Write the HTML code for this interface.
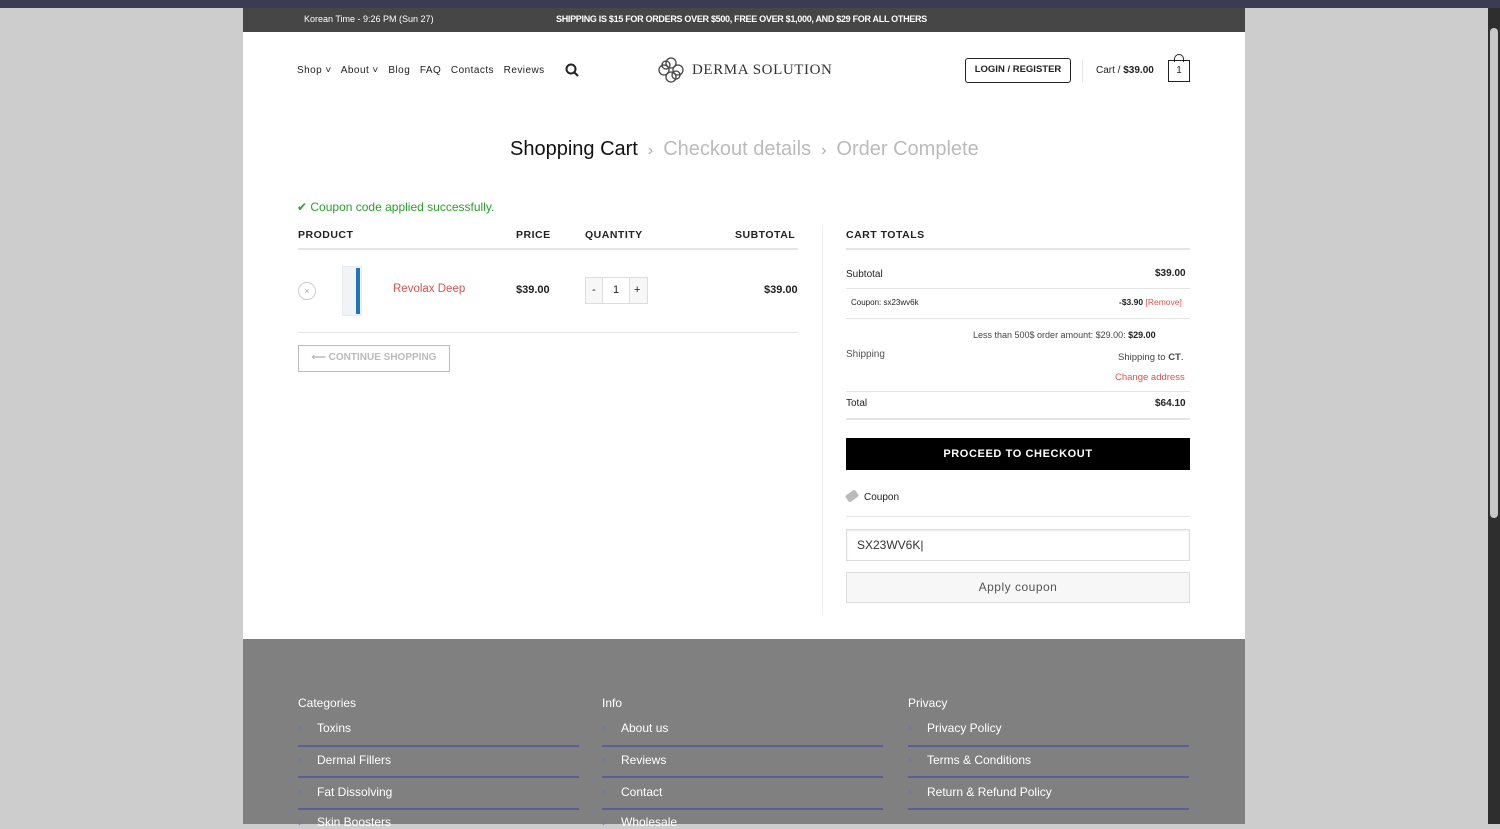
<!DOCTYPE html>
<html><head><meta charset="utf-8"><style>
*{margin:0;padding:0;box-sizing:border-box}
body{width:1500px;height:824px;overflow:hidden;background:#cdcdcd;font-family:"Liberation Sans",sans-serif;position:relative;color:#222}
.a{position:absolute}
.top{left:0;top:0;width:1500px;height:8px;background:#3b3b52}
.sb{left:1488px;top:8px;width:12px;height:816px;background:#2e2e2e}
.sb i{position:absolute;left:2px;top:20px;width:8px;height:490px;background:#c8c8c8;border-radius:4px}
.wrap{left:243px;top:8px;width:1002px;height:631px;background:#fff}
.tb{left:243px;top:8px;width:1002px;height:24px;background:#464646;color:#fff;font-size:9px}
.foot{left:243px;top:639px;width:1002px;height:185px;background:#808080;color:#fff}
.nav{font-size:10px;color:#222;letter-spacing:.45px;word-spacing:0}
.sm{font-size:10px}
.b{font-weight:bold}
.hr{height:1px;background:#e4e4e4}
.fl{position:absolute;font-size:12px;color:#fff}
.fl span{color:#6a74b0;display:inline-block;width:19px}
.fline{position:absolute;height:2px;background:#5a6190;width:281px}
</style></head><body>
<div class="a top"></div>
<div class="a wrap"></div>
<div class="a tb"><span class="a" style="left:61px;top:6px">Korean Time - 9:26 PM (Sun 27)</span><span class="a b" style="left:313px;top:6px;letter-spacing:-.3px">SHIPPING IS $15 FOR ORDERS OVER $500, FREE OVER $1,000, AND $29 FOR ALL OTHERS</span></div>
<div class="a nav" style="left:297px;top:65px">Shop ˅ &nbsp; About ˅ &nbsp; Blog &nbsp; FAQ &nbsp; Contacts &nbsp; Reviews</div>
<svg class="a" style="left:565px;top:63px" width="14" height="14"><circle cx="6" cy="6" r="4.5" fill="none" stroke="#222" stroke-width="2"/><path d="M9 9l4 4" stroke="#222" stroke-width="2"/></svg>
<svg class="a" style="left:656px;top:56px" width="30" height="28"><g fill="none" stroke="#444" stroke-width="1.3"><circle cx="15" cy="7" r="5"/><circle cx="15" cy="21" r="5"/><circle cx="8" cy="14" r="5"/><circle cx="22" cy="14" r="5"/><circle cx="10" cy="9" r="4"/><circle cx="20" cy="19" r="4"/></g></svg>
<div class="a" style="left:692px;top:62px;font-family:'Liberation Serif',serif;font-size:15px;color:#333;letter-spacing:.6px">DERMA SOLUTION</div>
<div class="a b" style="left:965px;top:58px;width:106px;height:25px;border:1.5px solid #222;border-radius:3px;font-size:9.5px;text-align:center;line-height:22px">LOGIN / REGISTER</div>
<div class="a" style="left:1082px;top:60px;width:1px;height:22px;background:#e5e5e5"></div>
<div class="a sm" style="left:1096px;top:65px">Cart / <b>$39.00</b></div>
<div class="a" style="left:1168px;top:60px;width:22px;height:22px;border:1.5px solid #222;font-size:10px;text-align:center;line-height:19px">1</div>
<div class="a" style="left:1174px;top:54px;width:10px;height:8px;border:1.5px solid #222;border-bottom:none;border-radius:5px 5px 0 0"></div>
<div class="a" style="left:510px;top:138px;font-size:20px;color:#111">Shopping Cart <span style="color:#aaa;font-size:16px">&nbsp;›&nbsp;</span> <span style="color:#bbb">Checkout details</span> <span style="color:#aaa;font-size:16px">&nbsp;›&nbsp;</span> <span style="color:#bbb">Order Complete</span></div>
<div class="a" style="left:297px;top:200px;font-size:12px;color:#2ba02b">✔ Coupon code applied successfully.</div>
<div class="a b" style="left:298px;top:229px;font-size:10.5px;letter-spacing:.5px">PRODUCT</div>
<div class="a b" style="left:516px;top:229px;font-size:10.5px;letter-spacing:.5px">PRICE</div>
<div class="a b" style="left:585px;top:229px;font-size:10.5px;letter-spacing:.5px">QUANTITY</div>
<div class="a b" style="left:735px;top:229px;font-size:10.5px;letter-spacing:.5px">SUBTOTAL</div>
<div class="a hr" style="left:298px;top:248px;width:500px;height:2px"></div>
<div class="a" style="left:298px;top:282px;width:18px;height:18px;border:1px solid #ccc;border-radius:50%;font-size:9px;color:#aaa;text-align:center;line-height:16px">×</div>
<div class="a" style="left:342px;top:266px;width:20px;height:50px;background:#f1f4f6;border:1px solid #e8ecef"><div style="position:absolute;right:1px;top:1px;width:4px;height:46px;background:#1d76bd"></div></div>
<div class="a" style="left:393px;top:283px;font-size:11.5px;color:#d9534f">Revolax Deep</div>
<div class="a b" style="left:516px;top:284px;font-size:11px">$39.00</div>
<div class="a" style="left:585px;top:277px;width:63px;height:27px;border:1px solid #ddd;background:#f7f7f7;font-size:11px"><span class="a" style="left:6px;top:6px">-</span><div class="a" style="left:16px;top:-1px;width:28px;height:27px;background:#fff;border:1px solid #ddd;text-align:center;line-height:25px">1</div><span class="a" style="left:48px;top:6px">+</span></div>
<div class="a b" style="left:764px;top:284px;font-size:11px">$39.00</div>
<div class="a hr" style="left:298px;top:332px;width:500px"></div>
<div class="a b" style="left:298px;top:345px;width:152px;height:27px;border:1.5px solid #bbb;color:#bbb;font-size:10px;text-align:center;line-height:24px">⟵ CONTINUE SHOPPING</div>
<div class="a" style="left:822px;top:225px;width:1px;height:390px;background:#ececec"></div>
<div class="a b" style="left:846px;top:229px;font-size:10.5px;letter-spacing:.5px">CART TOTALS</div>
<div class="a hr" style="left:846px;top:248px;width:344px;height:2px"></div>
<div class="a sm" style="left:846px;top:269px">Subtotal</div><div class="a sm b" style="left:1155px;top:268px">$39.00</div>
<div class="a hr" style="left:846px;top:288px;width:344px"></div>
<div class="a" style="left:851px;top:298px;font-size:8px">Coupon: sx23wv6k</div><div class="a" style="left:1119px;top:297px;font-size:8.5px"><b>-$3.90</b> <span style="color:#d9534f">[Remove]</span></div>
<div class="a hr" style="left:846px;top:318px;width:344px"></div>
<div class="a" style="left:973px;top:330px;font-size:9px;color:#444">Less than 500$ order amount: $29.00: <b style="color:#222">$29.00</b></div>
<div class="a sm" style="left:846px;top:349px;color:#555">Shipping</div>
<div class="a" style="left:1118px;top:352px;font-size:9.5px;color:#444">Shipping to <b>CT</b>.</div>
<div class="a" style="left:1115px;top:372px;font-size:9.5px;color:#d9534f">Change address</div>
<div class="a hr" style="left:846px;top:391px;width:344px"></div>
<div class="a sm" style="left:846px;top:398px">Total</div><div class="a sm b" style="left:1155px;top:398px">$64.10</div>
<div class="a hr" style="left:846px;top:418px;width:344px;height:2px"></div>
<div class="a b" style="left:846px;top:438px;width:344px;height:32px;background:#000;color:#fff;font-size:11px;text-align:center;line-height:32px;letter-spacing:.6px">PROCEED TO CHECKOUT</div>
<div class="a" style="left:846px;top:492px;width:12px;height:8px;background:#bbb;transform:rotate(-35deg);border-radius:2px"></div>
<div class="a" style="left:864px;top:492px;font-size:10px">Coupon</div>
<div class="a hr" style="left:846px;top:516px;width:344px"></div>
<div class="a" style="left:846px;top:529px;width:344px;height:32px;border:1px solid #ddd;box-shadow:inset 0 1px 2px rgba(0,0,0,.08);font-size:12px;padding:8px 10px;color:#333">SX23WV6K|</div>
<div class="a" style="left:846px;top:572px;width:344px;height:31px;border:1px solid #ddd;background:#f7f7f7;font-size:12px;text-align:center;line-height:29px;color:#555;letter-spacing:.5px">Apply coupon</div>
<div class="a foot"></div>
<div class="fl" style="left:298px;top:696px">Categories</div>
<div class="fl" style="left:602px;top:696px">Info</div>
<div class="fl" style="left:908px;top:696px">Privacy</div>
<div class="fl" style="left:298px;top:721px"><span>›</span>Toxins</div>
<div class="fl" style="left:298px;top:753px"><span>›</span>Dermal Fillers</div>
<div class="fl" style="left:298px;top:785px"><span>›</span>Fat Dissolving</div>
<div class="fl" style="left:298px;top:815px"><span>›</span>Skin Boosters</div>
<div class="fl" style="left:602px;top:721px"><span>›</span>About us</div>
<div class="fl" style="left:602px;top:753px"><span>›</span>Reviews</div>
<div class="fl" style="left:602px;top:785px"><span>›</span>Contact</div>
<div class="fl" style="left:602px;top:815px"><span>›</span>Wholesale</div>
<div class="fl" style="left:908px;top:721px"><span>›</span>Privacy Policy</div>
<div class="fl" style="left:908px;top:753px"><span>›</span>Terms &amp; Conditions</div>
<div class="fl" style="left:908px;top:785px"><span>›</span>Return &amp; Refund Policy</div>
<div class="fline" style="left:298px;top:745px"></div><div class="fline" style="left:298px;top:776px"></div><div class="fline" style="left:298px;top:808px"></div>
<div class="fline" style="left:602px;top:745px"></div><div class="fline" style="left:602px;top:776px"></div><div class="fline" style="left:602px;top:808px"></div>
<div class="fline" style="left:908px;top:745px"></div><div class="fline" style="left:908px;top:776px"></div><div class="fline" style="left:908px;top:808px"></div>
<div class="a sb"><i></i></div>
</body></html>
